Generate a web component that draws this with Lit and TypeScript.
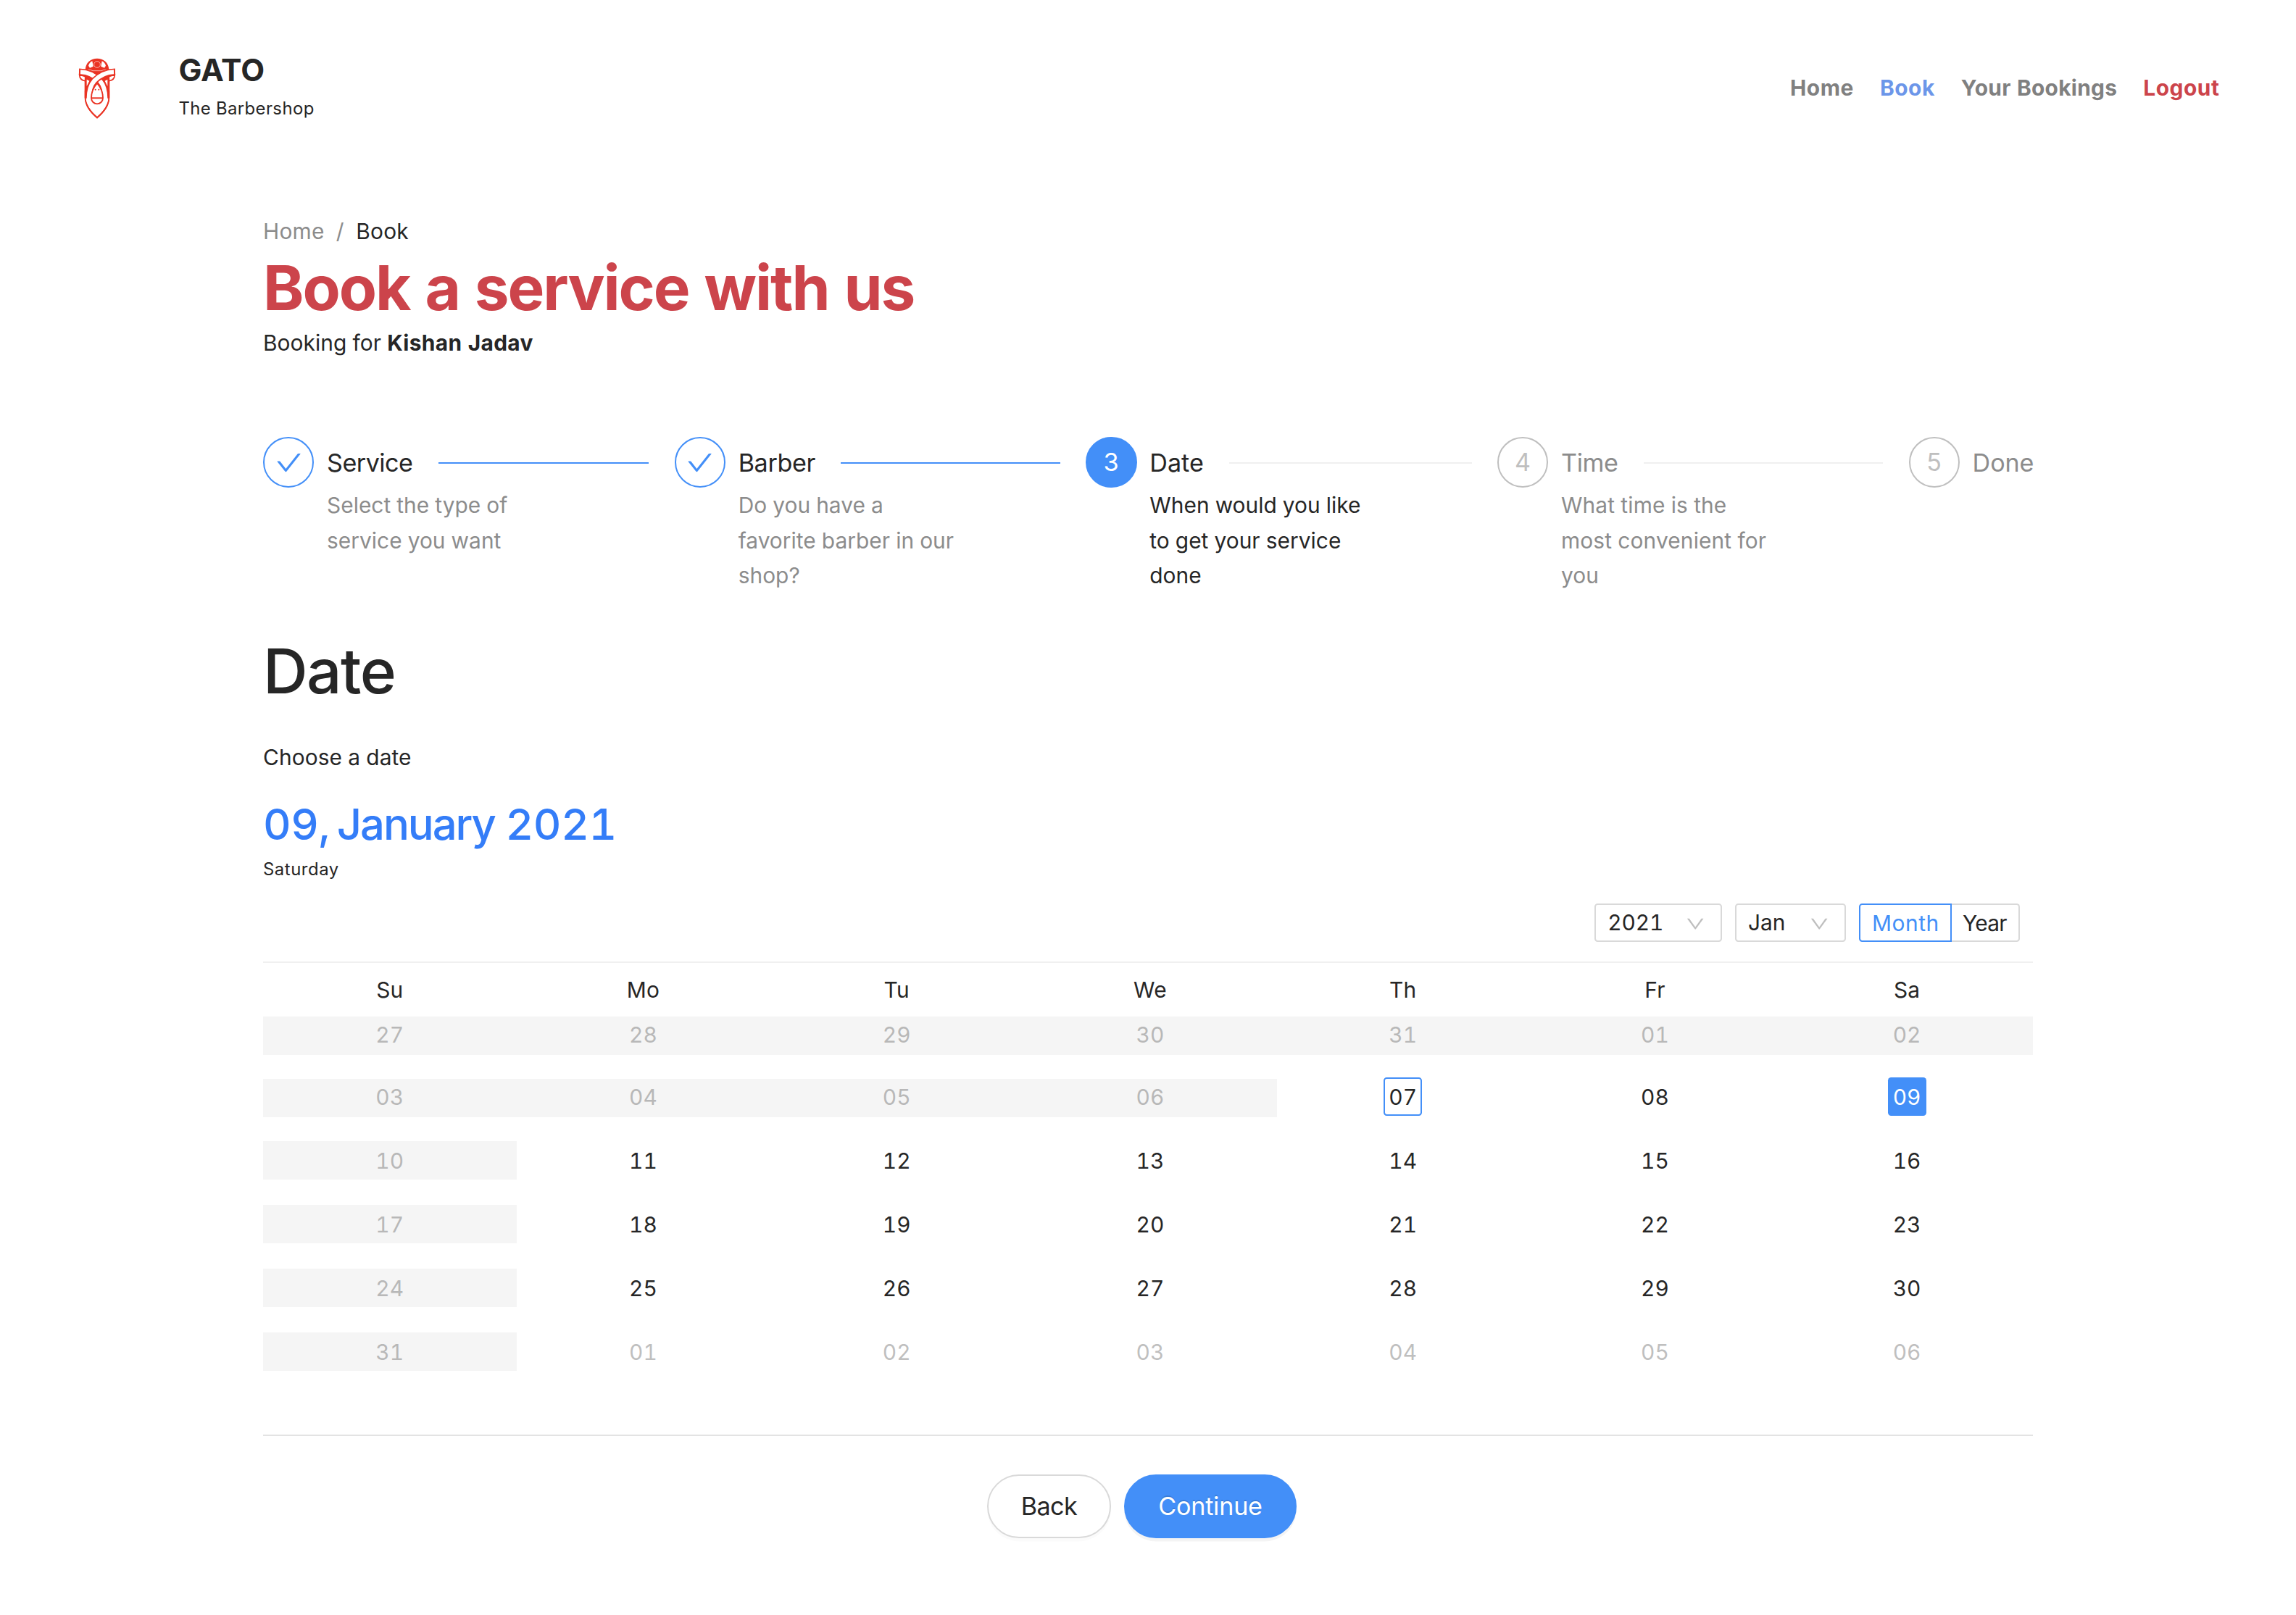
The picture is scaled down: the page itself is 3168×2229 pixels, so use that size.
import { LitElement, html, css, svg, nothing } from "lit";
import { customElement } from "lit/decorators.js";
import { classMap } from "lit/directives/class-map.js";

type StepStatus = "finish" | "process" | "wait";

interface Step {
  title: string;
  description: string;
  status: StepStatus;
}

interface Day {
  label: string;
  disabled?: boolean;
  outside?: boolean;
  today?: boolean;
  selected?: boolean;
}

const STEPS: Step[] = [
  { title: "Service", description: "Select the type of\nservice you want", status: "finish" },
  { title: "Barber", description: "Do you have a\nfavorite barber in our\nshop?", status: "finish" },
  { title: "Date", description: "When would you like\nto get your service\ndone", status: "process" },
  { title: "Time", description: "What time is the\nmost convenient for\nyou", status: "wait" },
  { title: "Done", description: "", status: "wait" },
];

const WEEKDAYS = ["Su", "Mo", "Tu", "We", "Th", "Fr", "Sa"];

/** Six weeks starting on Sunday, 27 December 2020. */
function buildWeeks(): Day[][] {
  const weeks: Day[][] = [];
  for (let w = 0; w < 6; w++) {
    const week: Day[] = [];
    for (let d = 0; d < 7; d++) {
      const date = new Date(2020, 11, 27 + w * 7 + d);
      const january = date.getFullYear() === 2021 && date.getMonth() === 0;
      const past = date < new Date(2021, 0, 7);
      week.push({
        label: String(date.getDate()).padStart(2, "0"),
        disabled: past || d === 0,
        outside: !january,
        today: january && date.getDate() === 7,
        selected: january && date.getDate() === 9,
      });
    }
    weeks.push(week);
  }
  return weeks;
}

const chevron = html`<svg class="chevron" viewBox="64 64 896 896" fill="currentColor">
  <path d="M884 256h-75c-5.1 0-9.9 2.5-12.9 6.6L512 654.2 227.9 262.6c-3-4.1-7.8-6.6-12.9-6.6h-75c-6.5 0-10.3 7.4-6.5 12.7l352.6 486.1c12.8 17.6 39 17.6 51.7 0l352.6-486.1c3.9-5.3.1-12.7-6.4-12.7z"/>
</svg>`;

const check = html`<svg class="check" viewBox="64 64 896 896" fill="currentColor">
  <path d="M912 190h-69.9c-9.8 0-19.1 4.5-25.1 12.2L404.7 724.5 207 474a32 32 0 00-25.1-12.2H112c-6.7 0-10.4 7.7-6.3 12.9l273.9 347c12.8 16.2 37.4 16.2 50.3 0l488.4-618.9c4.1-5.1.4-12.8-6.3-12.8z"/>
</svg>`;

const scarf = (d: string, inner: string) => svg`
  <path d=${d} fill="none" stroke="#ea3323" stroke-width="29"/>
  <path d=${inner} fill="none" stroke="#fff" stroke-width="18"/>`;

@customElement("app-header")
export class AppHeader extends LitElement {
  static styles = css`
    :host {
      display: flex;
      justify-content: space-between;
      align-items: center;
      height: 241.6px;
      box-sizing: border-box;
      padding: 0 105.5px 0 104px;
    }
    .brand { display: flex; align-items: center; }
    .logo { width: 60px; height: 92px; margin-right: 82.4px; }
    .name { font-size: 42.67px; font-weight: 700; line-height: 57.6px; }
    .tagline { font-size: 23.89px; line-height: 48px; letter-spacing: 0.42px; }
    nav { display: flex; gap: 36px; font-weight: 700; letter-spacing: 0.55px; color: #808080; }
    .active { color: #6c96e9; }
    .wide { letter-spacing: 0.3px; }
    .logout { color: #cc444b; }
  `;
  render() {
    return html`
      <div class="brand">
        <svg class="logo" viewBox="0 0 180 276">
          <path fill="#ea3323" d="M41 66C41 1 139 1 139 66L130 92H50Z"/>
          <path fill="#fff" d="M54 47Q58 33 70 28L74 50L60 56ZM126 47Q122 33 110 28L106 50L120 56Z"/>
          <circle cx="90" cy="42" r="13" fill="none" stroke="#fff" stroke-width="1.8"/>
          <path fill="#ea3323" d="M38 90H142V178C142 212 120 242 90 266C60 242 38 212 38 178Z"/>
          <path d="M52 64H62L72 68H108L118 64H128M58 70L90 84L122 70" fill="none" stroke="#fff" stroke-width="1.8"/>
          <path fill="#fff" d="M90 102C66 128 52 150 43 186C48 216 68 239 90 258C112 239 132 216 137 186C128 150 114 128 90 102Z"/>
          <path fill="#fff" stroke="#ea3323" stroke-width="5" d="M17 84C17 101 26 108 41 110V92ZM163 84C163 101 154 108 139 110V92Z"/>
          <path fill="#fff" d="M47 104L58 110L47 132ZM133 104L122 110L133 132Z"/>
          ${scarf("M15 73C58 74 84 92 102 110C120 130 124 156 124 182", "M21 73C58 74 84 92 102 110C120 130 124 156 124 184")}
          ${scarf("M165 73C122 74 96 92 78 110C60 130 56 156 56 182", "M159 73C122 74 96 92 78 110C60 130 56 156 56 184")}
          <path fill="none" stroke="#ea3323" stroke-width="5" d="M41 150V178C41 210 62 238 90 262C118 238 139 210 139 178V150"/>
          <path fill="#fff" stroke="#ea3323" stroke-width="5.5" d="M90 120C74 138 66 160 66 181A24 24 0 0 0 114 181C114 160 106 138 90 120Z"/>
          <path stroke="#ea3323" stroke-width="6" d="M66 181H114"/>
          <circle cx="83" cy="146" r="3" fill="#ea3323"/><circle cx="97" cy="146" r="3" fill="#ea3323"/>
        </svg>
        <div>
          <div class="name">GATO</div>
          <div class="tagline">The Barbershop</div>
        </div>
      </div>
      <nav>
        <span>Home</span>
        <span class="active">Book</span>
        <span class="wide">Your Bookings</span>
        <span class="logout">Logout</span>
      </nav>`;
  }
}

@customElement("booking-steps")
export class BookingSteps extends LitElement {
  static styles = css`
    :host { display: flex; gap: 35.2px; height: 215.2px; }
    .step { display: flex; flex: 1; min-width: 0; gap: 17.6px; }
    .step:last-child { flex: none; }
    .icon {
      flex: none;
      box-sizing: border-box;
      width: 70.4px;
      height: 70.4px;
      border: 2px solid #438ff8;
      border-radius: 50%;
      display: flex;
      align-items: center;
      justify-content: center;
      color: #438ff8;
      font-size: 34.13px;
    }
    .icon span { padding-top: 1px; }
    .check { width: 35.2px; height: 35.2px; }
    .body { flex: 1; min-width: 0; }
    .head {
      display: flex;
      align-items: center;
      gap: 35.2px;
      box-sizing: border-box;
      height: 70.4px;
      padding-top: 1.6px;
      font-size: 34.13px;
      letter-spacing: -0.35px;
      white-space: nowrap;
    }
    .finish:first-child .head { letter-spacing: -0.5px; }
    .process .head { letter-spacing: 0; }
    .step:last-child .head { width: 83.4px; letter-spacing: -0.1px; }
    .tail { flex: 1; height: 2px; background: #438ff8; }
    .description { white-space: pre; color: #8c8c8c; letter-spacing: 0.04px; }
    .process .icon { background: #438ff8; color: #fff; }
    .process .tail, .wait .tail { background: #f0f0f0; }
    .process .description { color: #262626; }
    .wait .description { letter-spacing: 0.15px; }
    .wait .icon { border-color: #bfbfbf; color: #bfbfbf; }
    .wait .head { color: #8c8c8c; }
  `;
  render() {
    return STEPS.map(
      (s, i) => html`
        <div class="step ${s.status}">
          <div class="icon">${s.status === "finish" ? check : html`<span>${i + 1}</span>`}</div>
          <div class="body">
            <div class="head">
              <span>${s.title}</span>
              ${i < STEPS.length - 1 ? html`<span class="tail"></span>` : nothing}
            </div>
            <div class="description">${s.description}</div>
          </div>
        </div>`
    );
  }
}

@customElement("booking-calendar")
export class BookingCalendar extends LitElement {
  static styles = css`
    :host { display: block; }
    .toolbar {
      display: flex;
      justify-content: flex-end;
      gap: 18px;
      padding: 0 17.6px 27.2px;
      border-bottom: 2px solid #f0f0f0;
      line-height: 50px;
    }
    .select, .option {
      box-sizing: border-box;
      height: 52.8px;
      border: 2px solid #d9d9d9;
      border-radius: 4.4px;
    }
    .select { display: flex; align-items: center; justify-content: space-between; padding: 0 22.2px 0 15.8px; }
    .year { width: 175.7px; letter-spacing: -0.1px; }
    .month { width: 153.3px; }
    .chevron { width: 26.4px; height: 26.4px; color: #bfbfbf; margin-top: 3px; }
    .mode { display: flex; }
    .option { text-align: center; }
    .option.on { width: 128px; border-color: #438ff8; border-radius: 4.4px 0 0 4.4px; color: #438ff8; letter-spacing: 0.6px; }
    .option.off { box-sizing: border-box; width: 94px; padding-right: 2px; border-left: 0; border-radius: 0 4.4px 4.4px 0; letter-spacing: -0.7px; }
    .grid { display: grid; grid-template-columns: 349.7px 349.7px 349.7px 349.7px 348px 347.6px 347.6px; }
    .weekday { height: 72px; line-height: 74.8px; text-align: center; letter-spacing: 0.3px; }
    .cell { height: 88px; text-align: center; letter-spacing: 0.1px; line-height: 54.4px; }
    .cell.tight { height: 86px; }
    .cell.last { height: 52.8px; }
    .fill { height: 52.8px; }
    .disabled .fill { background: #f5f5f5; }
    .disabled .value, .outside .value { color: #b8b8b8; }
    .outside:not(.disabled) .value { color: #bfbfbf; }
    /* The first two weeks sit slightly above their shaded band. */
    .raised { padding-top: 2.4px; box-sizing: border-box; }
    .raised .value { margin-top: -2.4px; }
    .value {
      display: inline-block;
      box-sizing: border-box;
      width: 52.8px;
      height: 52.8px;
      border-radius: 4.4px;
      vertical-align: top;
    }
    .today .value { border: 2px solid #438ff8; line-height: 50.4px; }
    .selected .value { background: #438ff8; color: #fff; }
  `;
  render() {
    return html`
      <div class="toolbar">
        <div class="select year"><span>2021</span>${chevron}</div>
        <div class="select month"><span>Jan</span>${chevron}</div>
        <div class="mode">
          <div class="option on">Month</div>
          <div class="option off">Year</div>
        </div>
      </div>
      <div class="grid">
        ${WEEKDAYS.map((d) => html`<div class="weekday">${d}</div>`)}
        ${buildWeeks().map((week, w) =>
          week.map(
            (d) => html`
              <div class=${classMap({
                cell: true,
                tight: w === 0,
                last: w === 5,
                raised: w < 2,
                disabled: !!d.disabled,
                outside: !!d.outside,
                today: !!d.today,
                selected: !!d.selected,
              })}>
                <div class="fill"><span class="value">${d.label}</span></div>
              </div>`
          )
        )}
      </div>`;
  }
}

@customElement("app-root")
export class AppRoot extends LitElement {
  static styles = css`
    :host {
      display: block;
      height: 2229px;
      overflow: hidden;
      background: #fff;
      color: #262626;
      font-family: Inter, "Liberation Sans", sans-serif;
      font-size: 29.87px;
      line-height: 48.4px;
      font-variant-numeric: tabular-nums;
    }
    main { width: 2442px; margin: 0 auto; padding-top: 53.3px; }
    .breadcrumb { display: flex; color: #8c8c8c; letter-spacing: 0.25px; }
    .separator { margin: 0 16.5px 0 16px; }
    .current { color: #262626; }
    h1, h2, h3, p { margin: 0; }
    h1 { padding-top: 4px; font-size: 85.34px; line-height: 101.3px; font-weight: 700; letter-spacing: -2.03px; color: #cc444b; }
    .customer { letter-spacing: 0.08px; }
    b { font-weight: 700; letter-spacing: 0.34px; }
    booking-steps { margin-top: 106px; }
    h2 { margin-top: 54.8px; font-size: 85.34px; line-height: 106px; font-weight: 500; letter-spacing: -1.5px; }
    .hint { margin-top: 41.6px; letter-spacing: 0.11px; }
    h3 { margin-top: 28.3px; font-size: 59.74px; line-height: 80px; font-weight: 500; color: #347df8; white-space: pre; }
    .num { letter-spacing: -0.4px; }
    .name { letter-spacing: -2.05px; margin: 0 14.5px 0 9.5px; }
    .yr { letter-spacing: -0.3px; }
    .weekday { margin-top: 3.8px; font-size: 23.89px; line-height: 38px; letter-spacing: 0.55px; }
    booking-calendar { margin-top: 28px; }
    .actions {
      display: flex;
      justify-content: center;
      gap: 18px;
      margin-top: 88.2px;
      padding: 53px 17px 0 0;
      border-top: 2px solid #e3e3e3;
    }
    .button {
      box-sizing: border-box;
      height: 88px;
      padding: 0;
      border: 2px solid #d9d9d9;
      border-radius: 44px;
      background: #fff;
      color: #262626;
      font: 400 34.13px/84px Inter, "Liberation Sans", sans-serif;
      letter-spacing: -0.6px;
      text-align: center;
      box-shadow: 0 4.4px 0 rgba(0, 0, 0, 0.016);
    }
    .back { width: 171px; }
    .continue {
      width: 238px;
      border-color: #438ff8;
      background: #438ff8;
      color: #fff;
      letter-spacing: -0.2px;
      text-shadow: 0 -2.2px 0 rgba(0, 0, 0, 0.12);
      box-shadow: 0 4.4px 0 rgba(0, 0, 0, 0.045);
    }
  `;
  render() {
    return html`
      <app-header></app-header>
      <main>
        <div class="breadcrumb"><span>Home</span><span class="separator">/</span><span class="current">Book</span></div>
        <h1>Book a service with us</h1>
        <p class="customer">Booking for <b>Kishan Jadav</b></p>
        <booking-steps></booking-steps>
        <h2>Date</h2>
        <p class="hint">Choose a date</p>
        <h3><span class="num">09,</span><span class="name">January</span><span class="yr">2021</span></h3>
        <p class="weekday">Saturday</p>
        <booking-calendar></booking-calendar>
        <div class="actions">
          <button class="button back">Back</button>
          <button class="button continue">Continue</button>
        </div>
      </main>`;
  }
}
